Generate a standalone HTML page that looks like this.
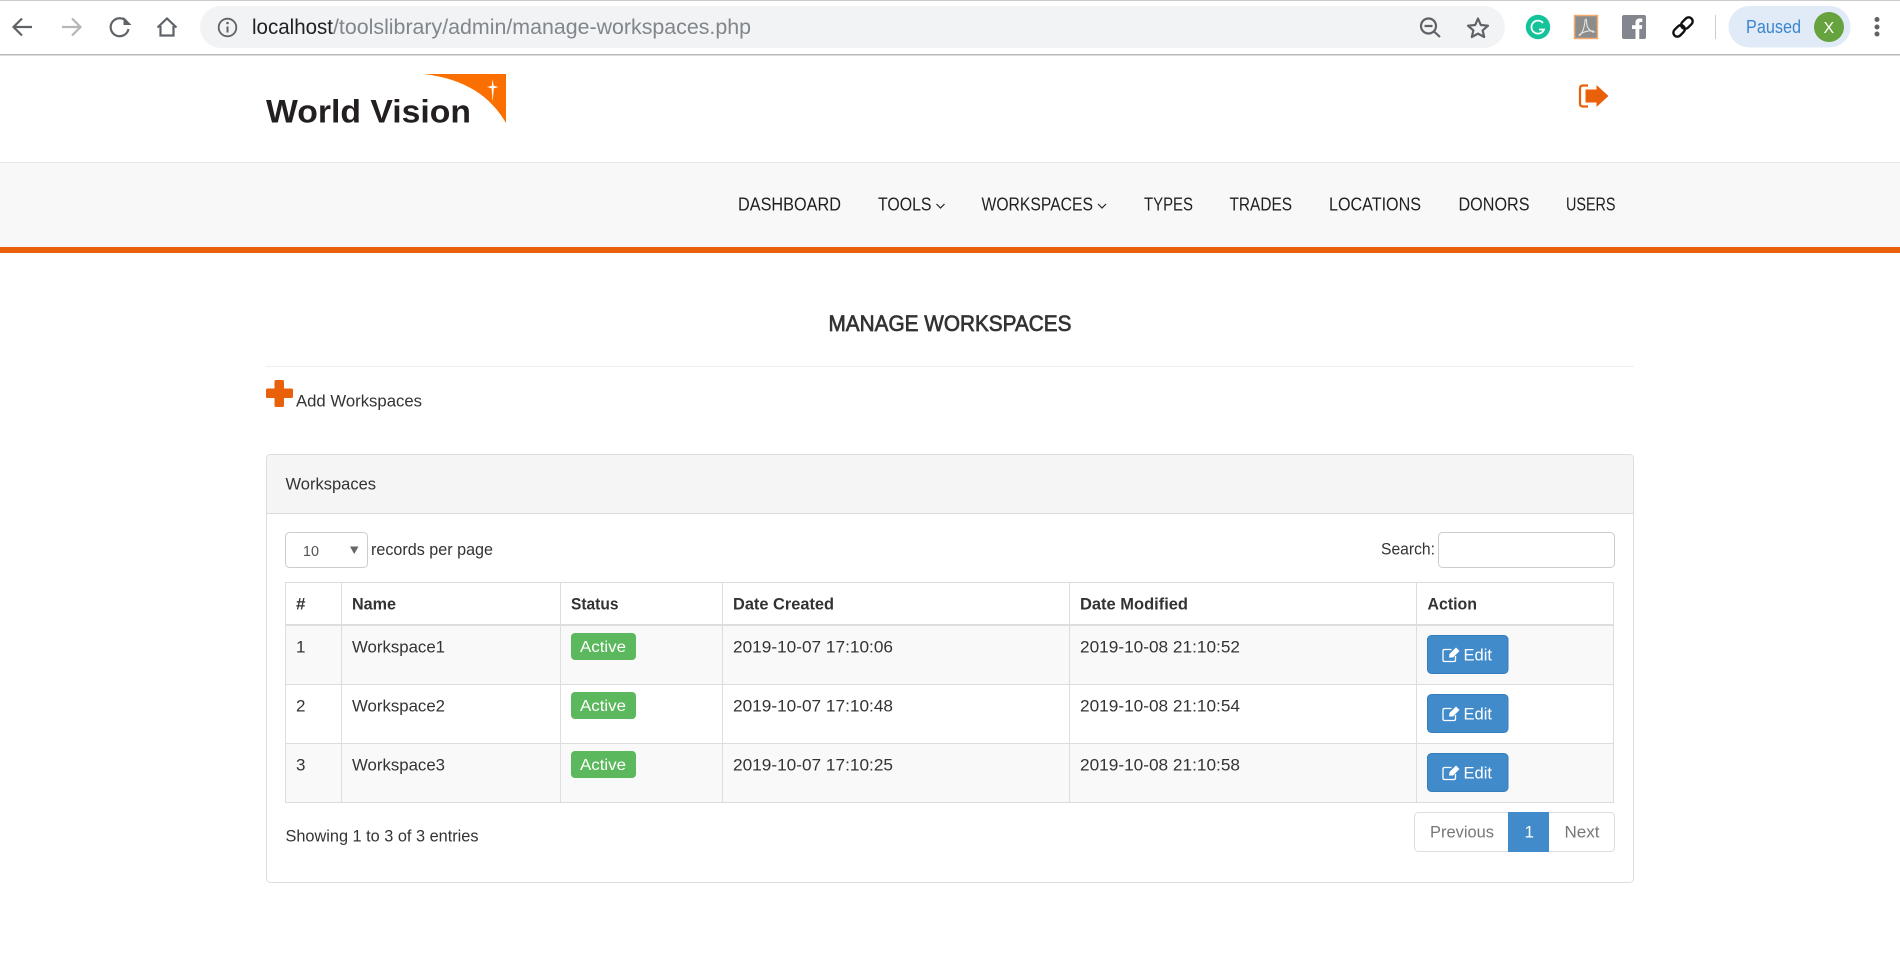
<!DOCTYPE html>
<html lang="en">
<head>
<meta charset="utf-8">
<title>Manage Workspaces</title>
<style>
html,body{margin:0;padding:0;background:#fff;width:1900px;height:958px;overflow:hidden}
svg{display:block}
text{font-family:"Liberation Sans",Arial,sans-serif;font-size:17px;fill:#333}
.nav{font-size:18px;fill:#1f1f1f}
.th{font-weight:bold;font-size:17px;fill:#333}
.w{fill:#fff}
.b{fill:#fff;font-size:15.500px}
.g{fill:#777}
</style>
</head>
<body>
<svg width="1900" height="958" viewBox="0 0 1900 958" xmlns="http://www.w3.org/2000/svg">
<!-- browser chrome -->
<rect x="0" y="0" width="1900" height="1" fill="#ccc"/>
<rect x="0" y="54" width="1900" height="1.5" fill="#b9b9b9"/>
<rect x="200" y="6" width="1305" height="42" rx="21" fill="#f1f3f4"/>
<g fill="none" stroke="#5f6368" stroke-width="2.2">
  <path d="M32 27H14M22 18.500L13.500 27L22 35.500"/>
  <path d="M62 27H80M72 18.500L80.500 27L72 35.500" stroke="#b4b6b8"/>
  <path d="M127 22A9 9 0 1 0 128.500 29"/>
  <path d="M157.500 27.500L167 18.500L176.500 27.500M160.500 26V35.500H173.500V26"/>
  <circle cx="227.500" cy="27.500" r="8.800" stroke-width="1.800"/>
  <path d="M227.500 26.500V32.500" stroke-width="2"/>
  <circle cx="1428.500" cy="26" r="7.500"/>
  <path d="M1424.500 26H1432.500M1434 31.500L1440 37"/>
  <path d="M1478 18.500L1480.800 25L1488 25.700L1482.600 30.400L1484.200 37L1478 33.600L1471.800 37L1473.400 30.400L1468 25.700L1475.200 25Z" stroke-linejoin="round"/>
</g>
<path d="M122 17V25H130Z" fill="#5f6368" transform="translate(1.500 0)"/>
<circle cx="227.500" cy="23" r="1.300" fill="#5f6368"/>
<text x="252" y="34" style="font-size:21.500px;fill:#202124" textLength="81" lengthAdjust="spacingAndGlyphs">localhost</text>
<text x="333" y="34" style="font-size:21.500px;fill:#80868b" textLength="418" lengthAdjust="spacingAndGlyphs">/toolslibrary/admin/manage-workspaces.php</text>
<circle cx="1538" cy="27" r="12.200" fill="#15c39a"/>
<path d="M1543 23A6.500 6.500 0 1 0 1544 29.500H1539" fill="none" stroke="#fff" stroke-width="1.800"/>
<rect x="1574.500" y="15.500" width="23" height="23" fill="#8c8c8c" stroke="#f5ab6b" stroke-width="1.500"/>
<path d="M1586 19C1584 19 1586 27 1581 34C1579 37 1578 35 1582 33C1586 31 1592 30 1594 31.500C1595 33 1591 32 1588 28C1586 25 1587 19 1586 19Z" fill="none" stroke="#e4e4e4" stroke-width="1.100"/>
<rect x="1622" y="15" width="24" height="24" rx="2" fill="#83868f"/>
<path d="M1635.500 39V29H1632V25.300H1635.500V22.500C1635.500 19.700 1637.300 18.500 1639.700 18.500H1642.300V22H1640.600C1639.600 22 1639.300 22.500 1639.300 23.300V25.300H1642.300L1641.800 29H1639.300V39Z" fill="#fff"/>
<g fill="none" stroke="#111" stroke-width="2.400" transform="rotate(-45 1683 27)">
  <rect x="1671" y="23" width="13" height="8" rx="4"/>
  <rect x="1682" y="23" width="13" height="8" rx="4"/>
</g>
<rect x="1715" y="15" width="1" height="24" fill="#ccc"/>
<rect x="1728.500" y="6" width="122" height="41.500" rx="20.700" fill="#e1ebf7"/>
<text x="1746" y="33" style="font-size:18px;fill:#3a85cf" textLength="55" lengthAdjust="spacingAndGlyphs">Paused</text>
<circle cx="1829" cy="27" r="15" fill="#66a23d"/>
<text x="1823.500" y="33" style="font-size:16px;fill:#fff">X</text>
<circle cx="1877" cy="19.500" r="2.500" fill="#5f6368"/>
<circle cx="1877" cy="27" r="2.500" fill="#5f6368"/>
<circle cx="1877" cy="34" r="2.500" fill="#5f6368"/>

<!-- logo -->
<text x="266" y="122.500" style="font-size:32px;font-weight:bold;fill:#231f20" textLength="205" lengthAdjust="spacingAndGlyphs">World Vision</text>
<path d="M424 74H506V123C491 97 466 79 424 74Z" fill="#fb6f00"/>
<path d="M492.700 79L493.600 85.800L498.500 87L493.800 88.200L492.700 102L491.600 88.200L487 87L491.800 85.800Z" fill="#fff"/>

<!-- logout -->
<path d="M1588 85.500H1583C1581 85.500 1580 86.500 1580 88.500V103.500C1580 105.500 1581 106.500 1583 106.500H1588" fill="none" stroke="#e8600a" stroke-width="2.200"/>
<path d="M1585.500 89.500H1596.500V85L1608.500 96L1596.500 107V102.500H1585.500Z" fill="#e8600a"/>

<!-- nav -->
<rect x="0" y="162" width="1900" height="85" fill="#f8f8f8"/>
<rect x="0" y="162" width="1900" height="1" fill="#e7e7e7"/>
<rect x="0" y="247" width="1900" height="6" fill="#e8600a"/>
<text class="nav" x="738" y="210.500" textLength="103" lengthAdjust="spacingAndGlyphs">DASHBOARD</text>
<text class="nav" x="878" y="210.500" textLength="53.500" lengthAdjust="spacingAndGlyphs">TOOLS</text>
<path d="M936.500 204L940.500 208L944.500 204" fill="none" stroke="#222" stroke-width="1.200"/>
<text class="nav" x="981.500" y="210.500" textLength="111.500" lengthAdjust="spacingAndGlyphs">WORKSPACES</text>
<path d="M1098 204L1102 208L1106 204" fill="none" stroke="#222" stroke-width="1.200"/>
<text class="nav" x="1144" y="210.500" textLength="49" lengthAdjust="spacingAndGlyphs">TYPES</text>
<text class="nav" x="1229.500" y="210.500" textLength="62.500" lengthAdjust="spacingAndGlyphs">TRADES</text>
<text class="nav" x="1329" y="210.500" textLength="92" lengthAdjust="spacingAndGlyphs">LOCATIONS</text>
<text class="nav" x="1458.500" y="210.500" textLength="71" lengthAdjust="spacingAndGlyphs">DONORS</text>
<text class="nav" x="1566" y="210.500" textLength="49.500" lengthAdjust="spacingAndGlyphs">USERS</text>

<!-- heading -->
<text x="828.500" y="331" style="font-size:22px;fill:#333;stroke:#333;stroke-width:.7" textLength="243" lengthAdjust="spacingAndGlyphs">MANAGE WORKSPACES</text>
<rect x="266" y="366" width="1368" height="1" fill="#eee"/>
<path d="M274.500 381.500Q274.500 380 276 380H282.500Q284 380 284 381.500V388.500H291.500Q293 388.500 293 390V396.500Q293 398 291.500 398H284V405.500Q284 407 282.500 407H276Q274.500 407 274.500 405.500V398H267.500Q266 398 266 396.500V390Q266 388.500 267.500 388.500H274.500Z" fill="#e8600a"/>
<text x="296" y="406.500" style="font-size:17px;fill:#333" textLength="126" lengthAdjust="spacingAndGlyphs">Add Workspaces</text>

<!-- panel -->
<rect x="266.500" y="454.500" width="1367" height="428" rx="4" fill="#fff" stroke="#ddd"/>
<path d="M267 514V459Q267 455 271 455H1629Q1633 455 1633 459V514Z" fill="#f5f5f5"/>
<rect x="267" y="513" width="1366" height="1" fill="#ddd"/>
<text x="285.500" y="489.500" textLength="90.500" lengthAdjust="spacingAndGlyphs">Workspaces</text>

<rect x="285.500" y="532.500" width="82" height="35" rx="4" fill="#fff" stroke="#ccc"/>
<text x="303" y="556" style="font-size:14.500px;fill:#555" textLength="16" lengthAdjust="spacingAndGlyphs">10</text>
<path d="M350 546.500H358.500L354.200 554Z" fill="#666"/>
<text x="371" y="555" textLength="122" lengthAdjust="spacingAndGlyphs">records per page</text>
<text x="1381" y="554.500" textLength="54" lengthAdjust="spacingAndGlyphs">Search:</text>
<rect x="1438.500" y="532.500" width="176" height="35" rx="4" fill="#fff" stroke="#ccc"/>

<!-- table -->
<rect x="285" y="626" width="1329" height="58" fill="#f9f9f9"/>
<rect x="285" y="743" width="1329" height="59" fill="#f9f9f9"/>
<g fill="#ddd">
  <rect x="285" y="582" width="1329" height="1"/>
  <rect x="285" y="624" width="1329" height="2"/>
  <rect x="285" y="684" width="1329" height="1"/>
  <rect x="285" y="743" width="1329" height="1"/>
  <rect x="285" y="802" width="1329" height="1"/>
  <rect x="285" y="582" width="1" height="221"/>
  <rect x="341" y="582" width="1" height="221"/>
  <rect x="560" y="582" width="1" height="221"/>
  <rect x="722" y="582" width="1" height="221"/>
  <rect x="1069" y="582" width="1" height="221"/>
  <rect x="1416" y="582" width="1" height="221"/>
  <rect x="1613" y="582" width="1" height="221"/>
</g>
<text class="th" x="296" y="609.500">#</text>
<text class="th" x="352" y="609.500" textLength="44" lengthAdjust="spacingAndGlyphs">Name</text>
<text class="th" x="571" y="609.500" textLength="47.500" lengthAdjust="spacingAndGlyphs">Status</text>
<text class="th" x="733" y="609.500" textLength="101" lengthAdjust="spacingAndGlyphs">Date Created</text>
<text class="th" x="1080" y="609.500" textLength="108" lengthAdjust="spacingAndGlyphs">Date Modified</text>
<text class="th" x="1427.500" y="609.500" textLength="49.500" lengthAdjust="spacingAndGlyphs">Action</text>

<!-- row 1 -->
<text x="296" y="652.500">1</text>
<text x="352" y="652.500" textLength="93" lengthAdjust="spacingAndGlyphs">Workspace1</text>
<rect x="571" y="633" width="65" height="27" rx="4" fill="#5cb85c"/>
<text class="b" x="580" y="652" textLength="46" lengthAdjust="spacingAndGlyphs">Active</text>
<text x="733" y="652.500" textLength="160" lengthAdjust="spacingAndGlyphs">2019-10-07 17:10:06</text>
<text x="1080" y="652.500" textLength="160" lengthAdjust="spacingAndGlyphs">2019-10-08 21:10:52</text>
<!-- row 2 -->
<text x="296" y="711.500">2</text>
<text x="352" y="711.500" textLength="93" lengthAdjust="spacingAndGlyphs">Workspace2</text>
<rect x="571" y="692" width="65" height="27" rx="4" fill="#5cb85c"/>
<text class="b" x="580" y="711" textLength="46" lengthAdjust="spacingAndGlyphs">Active</text>
<text x="733" y="711.500" textLength="160" lengthAdjust="spacingAndGlyphs">2019-10-07 17:10:48</text>
<text x="1080" y="711.500" textLength="160" lengthAdjust="spacingAndGlyphs">2019-10-08 21:10:54</text>
<!-- row 3 -->
<text x="296" y="770.500">3</text>
<text x="352" y="770.500" textLength="93" lengthAdjust="spacingAndGlyphs">Workspace3</text>
<rect x="571" y="751" width="65" height="27" rx="4" fill="#5cb85c"/>
<text class="b" x="580" y="770" textLength="46" lengthAdjust="spacingAndGlyphs">Active</text>
<text x="733" y="770.500" textLength="160" lengthAdjust="spacingAndGlyphs">2019-10-07 17:10:25</text>
<text x="1080" y="770.500" textLength="160" lengthAdjust="spacingAndGlyphs">2019-10-08 21:10:58</text>

<!-- edit buttons -->
<g>
  <rect x="1427.500" y="635.500" width="80.500" height="38" rx="4" fill="#428bca" stroke="#357ebd"/>
  <path d="M1455.500 656V660Q1455.500 661.500 1454 661.500H1444.500Q1443 661.500 1443 660V651Q1443 649.500 1444.500 649.500H1451.500" fill="none" stroke="#fff" stroke-width="1.300"/>
  <path d="M1449 657.500L1449.500 654L1456 647.500L1459.500 651L1453 657.500Z" fill="#fff"/>
  <text class="w" x="1463.500" y="660.500" textLength="28.500" lengthAdjust="spacingAndGlyphs">Edit</text>
</g>
<g>
  <rect x="1427.500" y="694.500" width="80.500" height="38" rx="4" fill="#428bca" stroke="#357ebd"/>
  <path d="M1455.500 715V719Q1455.500 720.500 1454 720.500H1444.500Q1443 720.500 1443 719V710Q1443 708.500 1444.500 708.500H1451.500" fill="none" stroke="#fff" stroke-width="1.300"/>
  <path d="M1449 716.500L1449.500 713L1456 706.500L1459.500 710L1453 716.500Z" fill="#fff"/>
  <text class="w" x="1463.500" y="719.500" textLength="28.500" lengthAdjust="spacingAndGlyphs">Edit</text>
</g>
<g>
  <rect x="1427.500" y="753.500" width="80.500" height="38" rx="4" fill="#428bca" stroke="#357ebd"/>
  <path d="M1455.500 774V778Q1455.500 779.500 1454 779.500H1444.500Q1443 779.500 1443 778V769Q1443 767.500 1444.500 767.500H1451.500" fill="none" stroke="#fff" stroke-width="1.300"/>
  <path d="M1449 775.500L1449.500 772L1456 765.500L1459.500 769L1453 775.500Z" fill="#fff"/>
  <text class="w" x="1463.500" y="778.500" textLength="28.500" lengthAdjust="spacingAndGlyphs">Edit</text>
</g>

<!-- footer -->
<text x="285.500" y="841.500" textLength="193" lengthAdjust="spacingAndGlyphs">Showing 1 to 3 of 3 entries</text>
<rect x="1414.500" y="812.500" width="200" height="39" rx="4" fill="#fff" stroke="#ddd"/>
<rect x="1508" y="812" width="41" height="40" fill="#428bca"/>
<text class="g" x="1430" y="837.500" textLength="64" lengthAdjust="spacingAndGlyphs">Previous</text>
<text class="w" x="1524.500" y="837.500">1</text>
<text class="g" x="1564.500" y="837.500" textLength="35" lengthAdjust="spacingAndGlyphs">Next</text>
</svg>
</body>
</html>
